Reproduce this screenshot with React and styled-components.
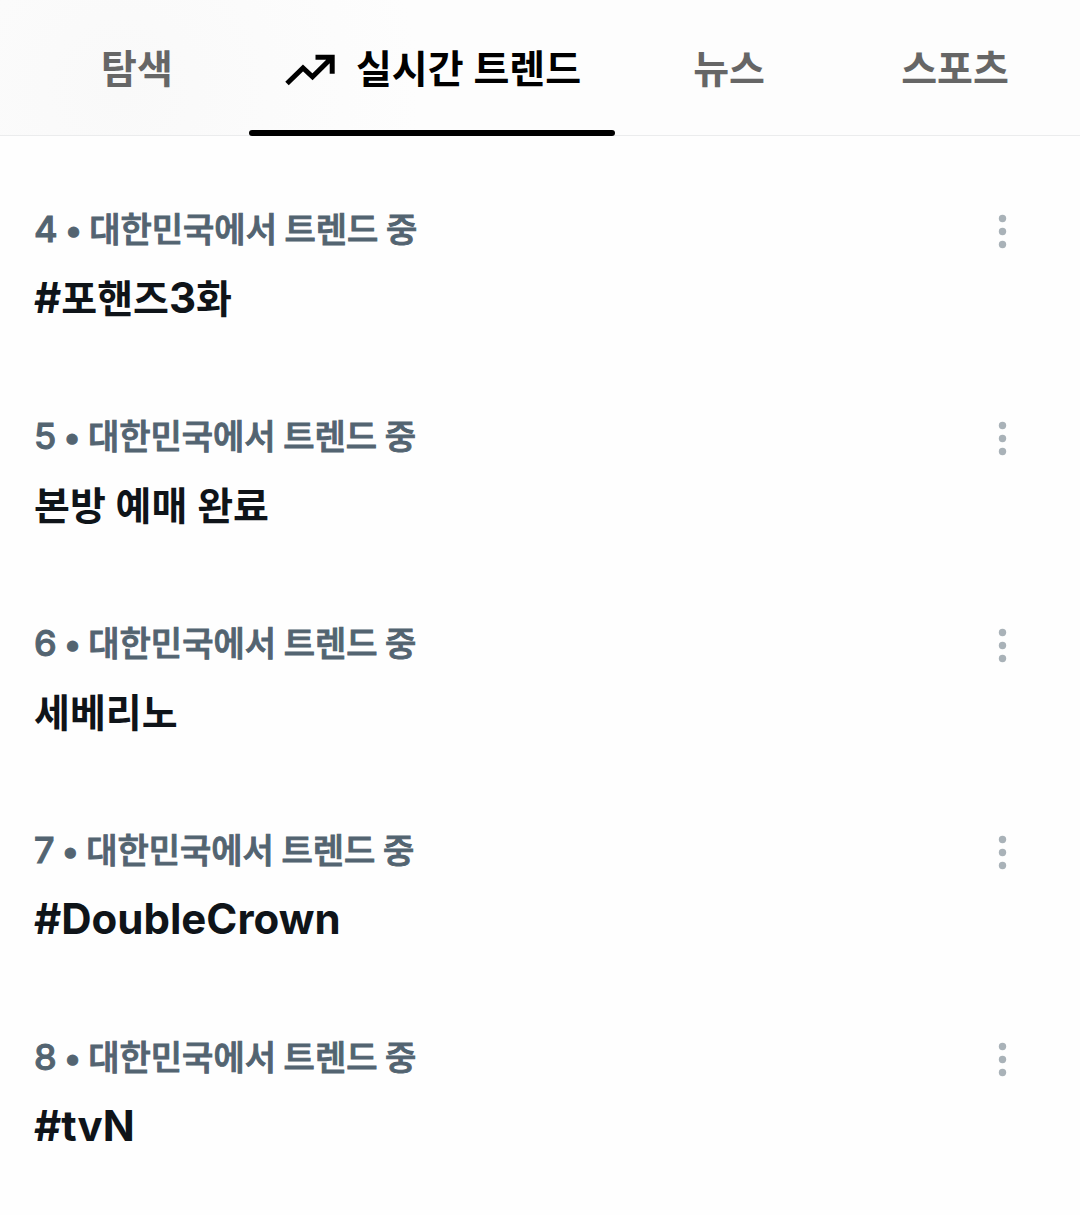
import React, { useState } from "react";
import styled, { createGlobalStyle } from "styled-components";

const tabs = [
  { id: "explore", label: "탐색" },
  { id: "trending", label: "실시간 트렌드", icon: true },
  { id: "news", label: "뉴스" },
  { id: "sports", label: "스포츠" },
];

const trends = [
  { rank: 4, name: "#포핸즈3화" },
  { rank: 5, name: "본방 예매 완료" },
  { rank: 6, name: "세베리노" },
  { rank: 7, name: "#DoubleCrown" },
  { rank: 8, name: "#tvN" },
];

// latin letters and digits are set slightly larger than the hangul
const splitLatin = (text) => text.split(/([#A-Za-z0-9]+)/).filter(Boolean);
const isLatin = (part) => /^[#A-Za-z0-9]/.test(part);

function TrendIcon() {
  return (
    <svg width="50" height="40" viewBox="0 -8 50 40" aria-hidden="true">
      <path
        d="M2 29.5L18 14L27.5 22.8L47 3.5M30.5 3.3H47.2V19.8"
        fill="none"
        stroke="currentColor"
        strokeWidth="5"
      />
    </svg>
  );
}

function DotsIcon() {
  return (
    <svg width="40" height="40" viewBox="0 0 40 40" aria-hidden="true">
      <circle cx="20.5" cy="7.5" r="3.7" />
      <circle cx="20.5" cy="20.5" r="3.7" />
      <circle cx="20.5" cy="33.5" r="3.7" />
    </svg>
  );
}

function App() {
  const [active, setActive] = useState("trending");

  return (
    <>
      <GlobalStyle />
      <TabBar role="tablist">
        {tabs.map((tab) => (
          <Tab
            key={tab.id}
            type="button"
            role="tab"
            aria-selected={active === tab.id}
            $active={active === tab.id}
            onClick={() => setActive(tab.id)}
          >
            {tab.icon && <TrendIcon />}
            {tab.label}
          </Tab>
        ))}
      </TabBar>
      <TrendList>
        {trends.map((trend) => (
          <TrendItem key={trend.rank}>
            <TrendText>
              <TrendMeta>
                <Rank>{trend.rank}</Rank>
                <Bullet>•</Bullet>
                <span>대한민국에서 트렌드 중</span>
              </TrendMeta>
              <TrendName>
                {splitLatin(trend.name).map((part, index) =>
                  isLatin(part) ? <Latin key={index}>{part}</Latin> : part
                )}
              </TrendName>
            </TrendText>
            <MoreButton type="button" aria-label="더 보기">
              <DotsIcon />
            </MoreButton>
          </TrendItem>
        ))}
      </TrendList>
    </>
  );
}

const GlobalStyle = createGlobalStyle`
  * {
    box-sizing: border-box;
  }
  body {
    margin: 0;
    background: #fefefe;
    font-family: Inter, "Noto Sans CJK KR", sans-serif;
  }
`;

const TabBar = styled.div`
  display: grid;
  grid-template-columns: 1fr auto 1fr 1fr;
  height: 136px;
  padding: 0 13px 0 23px;
  border-bottom: 1px solid #ebeced;
  background: radial-gradient(circle at 120px 90px, #f9f9f9, #fdfdfd 300px);
`;

const Tab = styled.button`
  position: relative;
  display: flex;
  align-items: center;
  justify-content: center;
  gap: 21px;
  padding: 0 34px 4px 36px;
  border: none;
  background: none;
  color: ${(props) => (props.$active ? "#000000" : "#666666")};
  font-family: inherit;
  font-size: 39px;
  font-weight: 600;
  white-space: nowrap;
  cursor: pointer;
  &::after {
    content: "";
    display: ${(props) => (props.$active ? "block" : "none")};
    position: absolute;
    left: 0;
    right: 0;
    bottom: -1px;
    height: 6px;
    border-radius: 3px;
    background: #000000;
  }
`;

const TrendList = styled.ul`
  margin: 0;
  padding: 27px 0 0;
  list-style: none;
`;

const TrendItem = styled.li`
  display: flex;
  align-items: flex-start;
  justify-content: space-between;
  padding: 42px 58px 43px 34px;
`;

const TrendText = styled.div`
  display: flex;
  flex-direction: column;
  gap: 18px;
`;

const TrendMeta = styled.div`
  display: flex;
  align-items: baseline;
  gap: 7px;
  height: 48px;
  color: #536471;
  font-family: "Noto Sans CJK KR", sans-serif;
  font-size: 34px;
  font-weight: 500;
  line-height: 46px;
  -webkit-text-stroke: 1px #536471;
`;

const Rank = styled.span`
  font-family: Inter, sans-serif;
  font-size: 36px;
  line-height: 1;
`;

const Bullet = styled.span`
  font-family: Inter, sans-serif;
  font-size: 33px;
  line-height: 1;
`;

const TrendName = styled.div`
  color: #0f1419;
  font-size: 39px;
  font-weight: 600;
  line-height: 56px;
`;

const Latin = styled.span`
  font-size: 42px;
  font-weight: 700;
  line-height: 1;
`;

const MoreButton = styled.button`
  display: flex;
  margin-top: 6px;
  padding: 0;
  border: none;
  background: none;
  fill: #a9b2b8;
  cursor: pointer;
`;

export default App;
